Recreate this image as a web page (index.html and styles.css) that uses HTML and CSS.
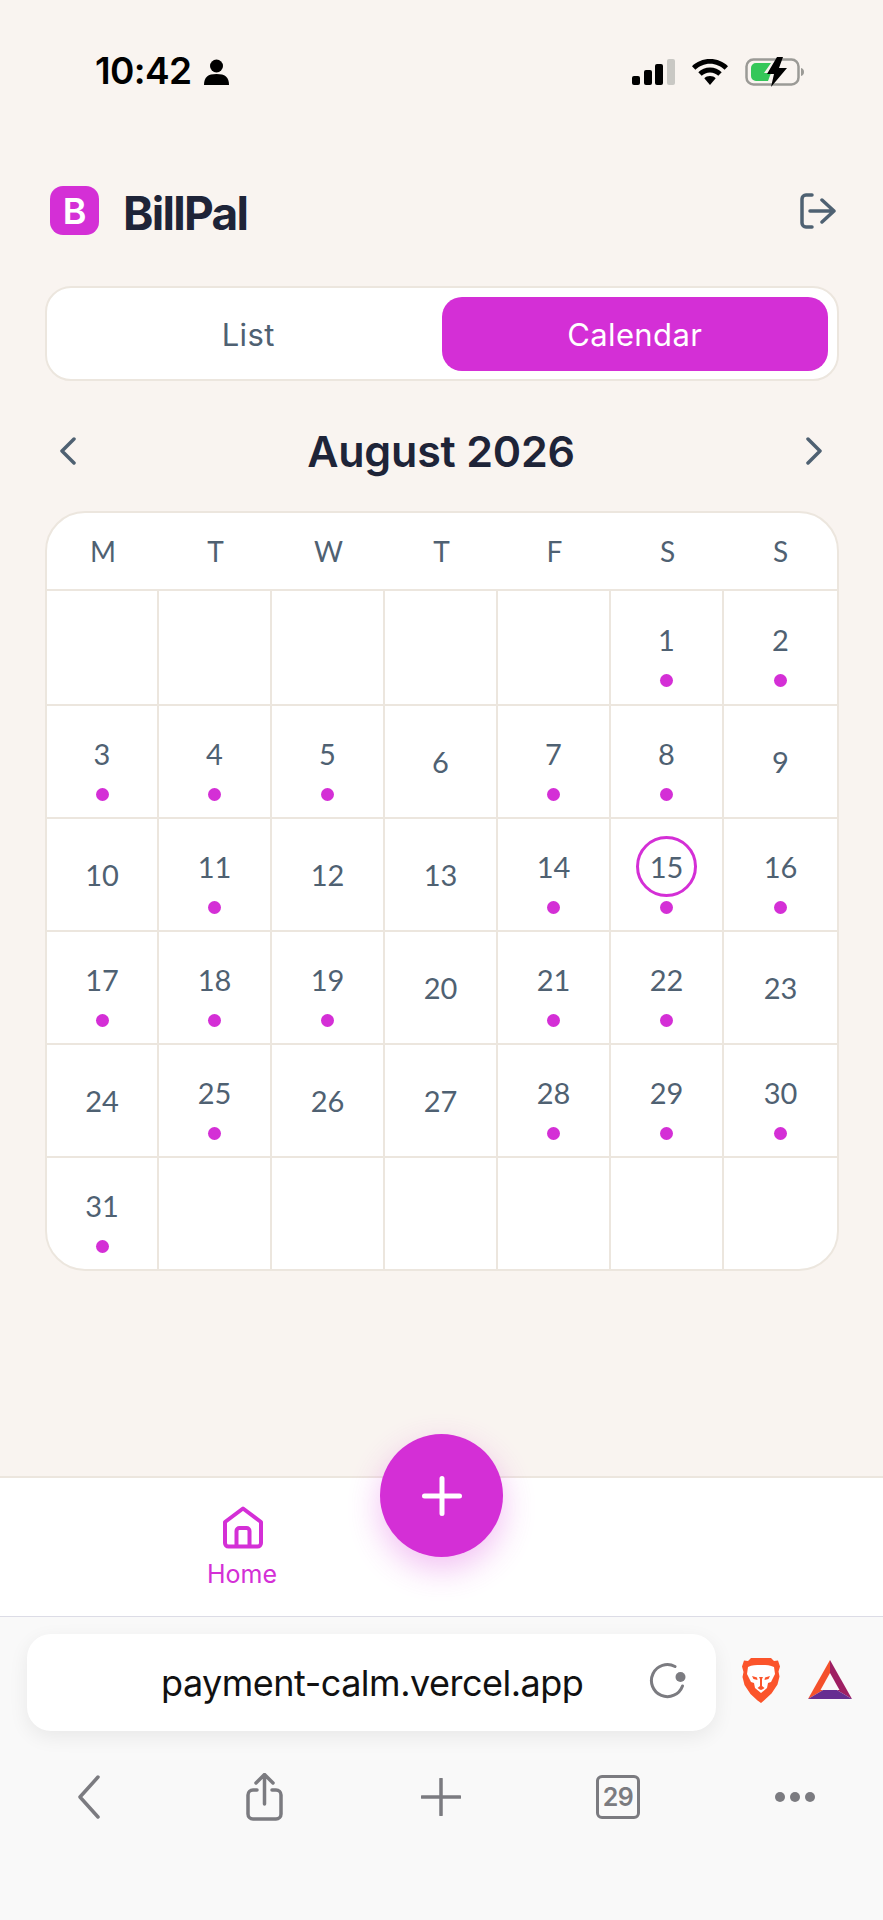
FILE: index.html
```html
<!DOCTYPE html>
<html lang="en">

<head>
  <meta charset="UTF-8">
  <meta name="viewport" content="width=device-width, initial-scale=1.0">
  <title>BillPal</title>
  <link rel="stylesheet" href="styles.css">
</head>

<body>
  <div class="statusBar">
    <div class="statusLeft">
      <span class="clock">10:42</span>
      <svg class="personIcon" viewBox="0 0 25 26"><circle cx="12.5" cy="7" r="6.5"/><path d="M0 26c0-8 4-11 12.5-11S25 18 25 26z"/></svg>
    </div>
    <div class="statusRight">
      <div class="signal"><i class="bar1"></i><i class="bar2"></i><i class="bar3"></i><i class="bar4"></i></div>
      <svg class="wifiIcon" viewBox="0 0 36 26"><path d="M18 0c7 0 13.500 2.700 18 7.200l-3.400 3.600C28.800 7 23.700 4.700 18 4.700S7.200 7 3.400 10.800L0 7.200C4.500 2.700 11 0 18 0z"/><path d="M18 8.500c4.600 0 8.700 1.800 11.700 4.700l-3.400 3.600c-2.100-2.100-5-3.400-8.300-3.400s-6.200 1.300-8.300 3.400l-3.400-3.600c3-2.900 7.100-4.700 11.700-4.700z"/><path d="M18 17c2.300 0 4.300.9 5.700 2.300L18 26l-5.700-6.700c1.400-1.400 3.400-2.300 5.700-2.300z"/></svg>
      <svg class="batteryIcon" viewBox="0 0 60 30"><rect x="1.500" y="2.500" width="52" height="25" rx="7" fill="none" stroke="#9b9a96" stroke-width="2.500"/><path d="M6 11a5 5 0 0 1 5-5h15l-7 10h7l-3 8H11a5 5 0 0 1-5-5z" fill="#35c759"/><path d="M56 11c2 .6 3 2 3 4s-1 3.400-3 4z" fill="#9b9a96"/><path d="M32 0h6l-4 11h8L26 30l3-13h-7z" fill="#000"/></svg>
    </div>
  </div>

  <main class="appMain">
    <header class="appHeader">
      <div class="brand">
        <div class="logo">B</div>
        <h1>BillPal</h1>
      </div>
      <svg class="logoutIcon" viewBox="0 0 37 36"><path d="M13 2H7a4 4 0 0 0-4 4v24a4 4 0 0 0 4 4h6"/><path d="M11 18h24M23 7l12 11-12 11"/></svg>
    </header>

    <div class="viewTabs">
      <button class="tab">List</button>
      <button class="tab active">Calendar</button>
    </div>

    <div class="monthRow">
      <svg class="chevron" viewBox="0 0 18 28"><path d="M15 2L3 14l12 12"/></svg>
      <h2>August 2026</h2>
      <svg class="chevron" viewBox="0 0 18 28"><path d="M3 2l12 12L3 26"/></svg>
    </div>

    <div class="calendar">
      <div class="weekHead">
        <span>M</span><span>T</span><span>W</span><span>T</span><span>F</span><span>S</span><span>S</span>
      </div>
      <div class="days">
        <div class="cell"></div>
        <div class="cell"></div>
        <div class="cell"></div>
        <div class="cell"></div>
        <div class="cell"></div>
        <div class="cell"><span class="num">1</span><i class="dot"></i></div>
        <div class="cell"><span class="num">2</span><i class="dot"></i></div>

        <div class="cell"><span class="num">3</span><i class="dot"></i></div>
        <div class="cell"><span class="num">4</span><i class="dot"></i></div>
        <div class="cell"><span class="num">5</span><i class="dot"></i></div>
        <div class="cell"><span class="num">6</span></div>
        <div class="cell"><span class="num">7</span><i class="dot"></i></div>
        <div class="cell"><span class="num">8</span><i class="dot"></i></div>
        <div class="cell"><span class="num">9</span></div>

        <div class="cell"><span class="num">10</span></div>
        <div class="cell"><span class="num">11</span><i class="dot"></i></div>
        <div class="cell"><span class="num">12</span></div>
        <div class="cell"><span class="num">13</span></div>
        <div class="cell"><span class="num">14</span><i class="dot"></i></div>
        <div class="cell today"><span class="num">15</span><i class="dot"></i></div>
        <div class="cell"><span class="num">16</span><i class="dot"></i></div>

        <div class="cell"><span class="num">17</span><i class="dot"></i></div>
        <div class="cell"><span class="num">18</span><i class="dot"></i></div>
        <div class="cell"><span class="num">19</span><i class="dot"></i></div>
        <div class="cell"><span class="num">20</span></div>
        <div class="cell"><span class="num">21</span><i class="dot"></i></div>
        <div class="cell"><span class="num">22</span><i class="dot"></i></div>
        <div class="cell"><span class="num">23</span></div>

        <div class="cell"><span class="num">24</span></div>
        <div class="cell"><span class="num">25</span><i class="dot"></i></div>
        <div class="cell"><span class="num">26</span></div>
        <div class="cell"><span class="num">27</span></div>
        <div class="cell"><span class="num">28</span><i class="dot"></i></div>
        <div class="cell"><span class="num">29</span><i class="dot"></i></div>
        <div class="cell"><span class="num">30</span><i class="dot"></i></div>

        <div class="cell"><span class="num">31</span><i class="dot"></i></div>
        <div class="cell"></div>
        <div class="cell"></div>
        <div class="cell"></div>
        <div class="cell"></div>
        <div class="cell"></div>
        <div class="cell"></div>
      </div>
    </div>
  </main>

  <nav class="bottomNav">
    <div class="navItem">
      <svg class="homeIcon" viewBox="0 0 42 43"><path d="M3 16L21 2.500 39 16v21a3.500 3.500 0 0 1-3.500 3.500h-29A3.500 3.500 0 0 1 3 37z"/><path d="M14.500 40V25a3 3 0 0 1 3-3h7a3 3 0 0 1 3 3v15"/></svg>
      <span>Home</span>
    </div>
    <button class="fab">
      <svg viewBox="0 0 40 40"><path d="M20 2.500v35M2.500 20h35"/></svg>
    </button>
  </nav>

  <div class="browserBar">
    <div class="urlRow">
      <div class="urlBox">
        <span class="urlText">payment-calm.vercel.app</span>
        <svg class="reloadIcon" viewBox="0 0 37 36"><path d="M26 3.500A16 16 0 1 0 33.500 23"/><circle cx="31.500" cy="14" r="5" fill="#7b7b80" stroke="none"/></svg>
      </div>
      <svg class="braveIcon" viewBox="0 0 38 45"><path d="M9 0h20l3 3 4-.5 2 6-1.500 5 1 5-2 8-6 9-7 6.500L19 45l-3.500-2.500-7-6.500-6-9-2-8 1-5L0 8.500l2-6L6 3z" fill="#fb542b"/><path d="M19 7C14 7 10 7 6 9l-1 7 4 8 3 1 1 5 6 5 6-5 1-5 3-1 4-8-1-7c-4-2-8-2-13-2z" fill="#fff"/><path d="M10 18l5 1.500.5 2.500-4-1zM28 18l-5 1.500-.5 2.500 4-1zM17 19h4l-1 2v7l2.500 2-3 2-.5-.5-.5.5-3-2 2.500-2v-7z" fill="#fb542b"/></svg>
      <svg class="batIcon" viewBox="0 0 44 39"><path d="M22 0L0 39l22-13z" fill="#f4512c"/><path d="M22 0l22 39-22-13z" fill="#9e1f63"/><path d="M0 39h44l-22-13z" fill="#662d91"/><path d="M22 13l9.500 17h-19z" fill="#fafafa"/></svg>
    </div>
    <div class="toolBar">
      <svg class="backIcon" viewBox="0 0 23 44"><path d="M21 2L3 22l18 20"/></svg>
      <svg class="shareIcon" viewBox="0 0 37 48"><path d="M18.500 31V2M10 10l8.500-8.500L27 10"/><path d="M11 17H7a5 5 0 0 0-5 5v19a5 5 0 0 0 5 5h23a5 5 0 0 0 5-5V22a5 5 0 0 0-5-5h-4"/></svg>
      <svg class="plusIcon" viewBox="0 0 40 38"><path d="M20 1v36M1 19h38"/></svg>
      <div class="tabCount">29</div>
      <div class="moreDots"><i></i><i></i><i></i></div>
    </div>
  </div>
</body>

</html>
```

FILE: styles.css
```css
html {
  --magenta: #d42fd6;
  --dark: #1e2438;
  --slate: #4f6172;
  --line: #ece6de;
  --cream: #f9f4f0;
  --gray: #7b7b80;
  --font: 'Inter', 'Liberation Sans', sans-serif;
  --fontRound: 'Lato', 'Inter', sans-serif;
}

body {
  margin: 0;
  width: 883px;
  height: 1920px;
  display: flex;
  flex-direction: column;
  background: var(--cream);
  font-family: var(--font);
  overflow: hidden;
}

/* status bar */
.statusBar {
  padding-top: 56px;
  padding-left: 95px;
  padding-right: 78px;
  display: flex;
  justify-content: space-between;
  align-items: flex-start;
  height: 31px;
}

.statusLeft {
  display: flex;
  align-items: center;
  gap: 12px;
}

.clock {
  font-family: 'Inter', sans-serif;
  font-size: 37px;
  line-height: 30px;
  font-weight: 600;
  color: #000;
  letter-spacing: -0.600px;
}

.personIcon {
  width: 25px;
  height: 26px;
  margin-top: 1px;
}

.statusRight {
  display: flex;
  align-items: center;
  gap: 17px;
  margin-top: 1px;
}

.signal {
  display: flex;
  align-items: flex-end;
  gap: 3.700px;
  height: 26px;
}

.signal i {
  width: 8px;
  background: #000;
  border-radius: 2px;
}

.bar1 { height: 9px; }
.bar2 { height: 15px; }
.bar3 { height: 21px; }
.bar4 { height: 26px; background: #c9c8c4 !important; }

.wifiIcon {
  width: 36px;
  height: 26px;
}

.batteryIcon {
  width: 60px;
  height: 30px;
}

/* app */
.appMain {
  flex: 1;
  padding: 0 44px 0 45px;
}

.appHeader {
  margin-top: 99px;
  height: 49px;
  display: flex;
  justify-content: space-between;
  align-items: center;
}

.brand {
  display: flex;
  align-items: center;
  gap: 24px;
  padding-left: 5px;
}

.logo {
  width: 49px;
  height: 49px;
  border-radius: 13px;
  background: var(--magenta);
  color: #fff;
  font-size: 36px;
  font-weight: 600;
  display: flex;
  align-items: center;
  justify-content: center;
}

h1 {
  margin: 4px 0 0;
  font-size: 46px;
  font-weight: 700;
  color: var(--dark);
  letter-spacing: -1.700px;
}

.logoutIcon {
  width: 37px;
  height: 36px;
  margin-right: 3px;
  fill: none;
  stroke: var(--slate);
  stroke-width: 3.500;
  stroke-linecap: round;
  stroke-linejoin: round;
}

.viewTabs {
  margin-top: 51px;
  height: 74px;
  padding: 9px 9px 8px 8px;
  display: flex;
  background: #fff;
  border: 2px solid var(--line);
  border-radius: 26px;
}

.tab {
  flex: 1;
  border: 0;
  background: none;
  font-family: var(--font);
  font-size: 31px;
  font-weight: 400;
  letter-spacing: 0.400px;
  color: var(--slate);
  border-radius: 20px;
  padding: 0;
}

.tab.active {
  background: var(--magenta);
  color: #fff;
}

.monthRow {
  margin-top: 40px;
  height: 60px;
  padding: 0 16px 0 14px;
  display: flex;
  justify-content: space-between;
  align-items: center;
}

h2 {
  margin: 0;
  font-size: 43px;
  font-weight: 600;
  color: var(--dark);
  letter-spacing: -0.200px;
}

.chevron {
  width: 18px;
  height: 28px;
  fill: none;
  stroke: var(--slate);
  stroke-width: 3.500;
  stroke-linecap: round;
  stroke-linejoin: round;
}

.calendar {
  margin-top: 30px;
  background: #fff;
  border: 2px solid var(--line);
  border-radius: 40px;
  overflow: hidden;
}

.weekHead {
  height: 76px;
  display: grid;
  grid-template-columns: 112px repeat(5, 113px) 1fr;
  align-items: center;
  text-align: center;
  font-family: var(--fontRound);
  font-size: 28px;
  color: var(--slate);
  border-bottom: 2px solid var(--line);
}

.days {
  display: grid;
  grid-template-columns: 112px repeat(5, 113px) 1fr;
  grid-template-rows: 115px repeat(4, 113px) 111px;
}

.cell {
  display: flex;
  flex-direction: column;
  align-items: center;
  justify-content: center;
  border-right: 2px solid var(--line);
  border-bottom: 2px solid var(--line);
  box-sizing: border-box;
  font-family: var(--fontRound);
  font-size: 29px;
  color: var(--slate);
}

.cell:nth-child(7n) {
  border-right: 0;
}

.cell:nth-last-child(-n+7) {
  border-bottom: 0;
}

.num {
  width: 61px;
  height: 61px;
  box-sizing: border-box;
  border-radius: 50%;
  display: flex;
  align-items: center;
  justify-content: center;
}

.today .num {
  border: 3px solid var(--magenta);
}

.dot {
  width: 13px;
  height: 13px;
  margin-top: 4px;
  border-radius: 50%;
  background: var(--magenta);
}

/* bottom nav */
.bottomNav {
  position: relative;
  height: 138px;
  background: #fff;
  border-top: 2px solid var(--line);
  border-bottom: 1px solid #dcdce6;
}

.navItem {
  width: 484px;
  padding-top: 28px;
  display: flex;
  flex-direction: column;
  align-items: center;
  gap: 10px;
  color: var(--magenta);
  font-family: var(--font);
  font-size: 25px;
}

.homeIcon {
  width: 42px;
  height: 43px;
  margin-left: 2px;
  fill: none;
  stroke: var(--magenta);
  stroke-width: 4;
  stroke-linecap: round;
  stroke-linejoin: round;
}

.fab {
  position: absolute;
  left: 380px;
  top: -44px;
  width: 123px;
  height: 123px;
  padding: 0;
  border: 0;
  border-radius: 50%;
  background: var(--magenta);
  box-shadow: 0 12px 32px rgba(212, 47, 214, 0.3);
  display: flex;
  align-items: center;
  justify-content: center;
}

.fab svg {
  width: 40px;
  height: 40px;
  fill: none;
  stroke: #fff;
  stroke-width: 5;
  stroke-linecap: round;
}

/* browser chrome */
.browserBar {
  height: 303px;
  background: #f9f9f9;
}

.urlRow {
  margin-top: 17px;
  padding-left: 27px;
  display: flex;
  align-items: center;
}

.urlBox {
  width: 689px;
  height: 97px;
  padding-left: 134px;
  padding-right: 30px;
  box-sizing: border-box;
  background: #fff;
  border-radius: 24px;
  box-shadow: 0 6px 20px rgba(0, 0, 0, 0.07);
  display: flex;
  align-items: center;
  justify-content: space-between;
}

.urlText {
  font-family: 'Inter', sans-serif;
  font-size: 36px;
  color: #111;
  letter-spacing: -0.500px;
}

.reloadIcon {
  width: 37px;
  height: 36px;
  margin-top: -4px;
  fill: none;
  stroke: var(--gray);
  stroke-width: 3;
  stroke-linecap: round;
}

.braveIcon {
  width: 38px;
  height: 45px;
  margin-left: 26px;
  margin-top: -4px;
}

.batIcon {
  width: 44px;
  height: 39px;
  margin-left: 28px;
  margin-top: -6px;
}

.toolBar {
  margin-top: 42px;
  display: grid;
  grid-template-columns: repeat(5, 1fr);
  justify-items: center;
  align-items: center;
  height: 48px;
}

.toolBar svg {
  fill: none;
  stroke: var(--gray);
  stroke-width: 3.500;
  stroke-linecap: round;
  stroke-linejoin: round;
}

.backIcon {
  width: 23px;
  height: 44px;
}

.shareIcon {
  width: 37px;
  height: 48px;
}

.plusIcon {
  width: 40px;
  height: 38px;
}

.tabCount {
  width: 44px;
  height: 44px;
  box-sizing: border-box;
  border: 3.500px solid var(--gray);
  border-radius: 6px;
  color: var(--gray);
  font-size: 25px;
  font-weight: 600;
  display: flex;
  align-items: center;
  justify-content: center;
  letter-spacing: -0.500px;
}

.moreDots {
  display: flex;
  gap: 5px;
}

.moreDots i {
  width: 10px;
  height: 10px;
  border-radius: 50%;
  background: var(--gray);
}
```
